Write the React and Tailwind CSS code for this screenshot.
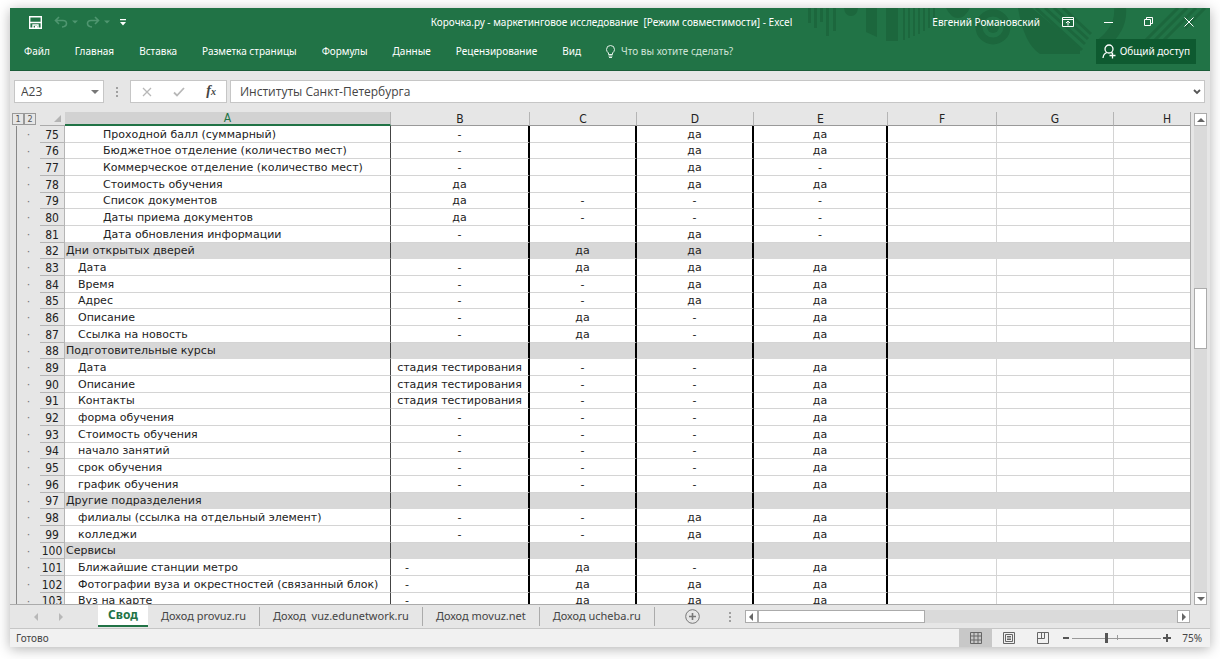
import { clsx } from "clsx";

const tabs = ["Файл", "Главная", "Вставка", "Разметка страницы", "Формулы", "Данные", "Рецензирование", "Вид"];

const columns = [
  { name: "A", width: "w-[326px]" },
  { name: "B", width: "w-[139px]" },
  { name: "C", width: "w-[107px]" },
  { name: "D", width: "w-[117px]" },
  { name: "E", width: "w-[134px]" },
  { name: "F", width: "w-[109px]" },
  { name: "G", width: "w-[117px]" },
  { name: "H", width: "w-[107px]" },
];

// level 0 is a section title, 1 and 2 are indented items
const rows = [
  { level: 2, label: "Проходной балл (суммарный)", values: ["-", "", "да", "да"] },
  { level: 2, label: "Бюджетное отделение (количество мест)", values: ["-", "", "да", "да"] },
  { level: 2, label: "Коммерческое отделение (количество мест)", values: ["-", "", "да", "-"] },
  { level: 2, label: "Стоимость обучения", values: ["да", "", "да", "да"] },
  { level: 2, label: "Список документов", values: ["да", "-", "-", "-"] },
  { level: 2, label: "Даты приема документов", values: ["да", "-", "-", "-"] },
  { level: 2, label: "Дата обновления информации", values: ["-", "", "да", "-"] },
  { level: 0, label: "Дни открытых дверей", values: ["", "да", "да", ""] },
  { level: 1, label: "Дата", values: ["-", "да", "да", "да"] },
  { level: 1, label: "Время", values: ["-", "-", "да", "да"] },
  { level: 1, label: "Адрес", values: ["-", "-", "да", "да"] },
  { level: 1, label: "Описание", values: ["-", "да", "-", "да"] },
  { level: 1, label: "Ссылка на новость", values: ["-", "да", "-", "да"] },
  { level: 0, label: "Подготовительные курсы", values: ["", "", "", ""] },
  { level: 1, label: "Дата", values: ["стадия тестирования", "-", "-", "да"] },
  { level: 1, label: "Описание", values: ["стадия тестирования", "-", "-", "да"] },
  { level: 1, label: "Контакты", values: ["стадия тестирования", "-", "-", "да"] },
  { level: 1, label: "форма обучения", values: ["-", "-", "-", "да"] },
  { level: 1, label: "Стоимость обучения", values: ["-", "-", "-", "да"] },
  { level: 1, label: "начало занятий", values: ["-", "-", "-", "да"] },
  { level: 1, label: "срок обучения", values: ["-", "-", "-", "да"] },
  { level: 1, label: "график обучения", values: ["-", "-", "-", "да"] },
  { level: 0, label: "Другие подразделения", values: ["", "", "", ""] },
  { level: 1, label: "филиалы (ссылка на отдельный элемент)", values: ["-", "-", "да", "да"] },
  { level: 1, label: "колледжи", values: ["-", "-", "да", "да"] },
  { level: 0, label: "Сервисы", values: ["", "", "", ""] },
  { level: 1, label: "Ближайшие станции метро", values: ["-", "да", "-", "да"], left: true },
  { level: 1, label: "Фотографии вуза и окрестностей (связанный блок)", values: ["-", "да", "да", "да"], left: true },
  { level: 1, label: "Вуз на карте", values: ["-", "да", "да", "да"], left: true },
];

const indents = ["pl-px", "pl-[13px]", "pl-[38px]"];

const sheets = ["Доход provuz.ru", "Доход  vuz.edunetwork.ru", "Доход movuz.net", "Доход ucheba.ru"];

const Arrow = ({ dir, className }) => {
  const paths = {
    up: "M0 6 L4 2 L8 6Z",
    down: "M0 2 L4 6 L8 2Z",
    left: "M6 0 L2 4 L6 8Z",
    right: "M2 0 L6 4 L2 8Z",
  };
  return (
    <svg viewBox="0 0 8 8" className={className || "size-2"} fill="currentColor" aria-hidden="true">
      <path d={paths[dir]} />
    </svg>
  );
};

const Dots = () => (
  <svg viewBox="0 0 2 12" className="h-3 w-0.5" fill="#a0a0a0" aria-hidden="true">
    <rect y="1" width="2" height="2" />
    <rect y="5" width="2" height="2" />
    <rect y="9" width="2" height="2" />
  </svg>
);

const HeaderPattern = () => (
  <svg
    className="pointer-events-none absolute top-0 right-0 h-[48px] w-[410px]"
    viewBox="0 0 410 48"
    fill="#1c673d"
    stroke="none"
    aria-hidden="true"
  >
    <path d="M8 0h3v15h-3zM14 0h3v20h-3zM20 0h3v14h-3zM26 0h3v28h-3zM33 0h3v23h-3zM44 0h14q-1 8-7 8t-7-8z" />
    <path d="M66 0h11v29l-11-5zM86 0h12v33h-12zM103 0h2v32h-2zM108 0h2v30h-2zM113 0h2v28h-2zM118 0h2v26h-2zM123 0h2v23h-2zM128 0h2v20h-2zM133 0h2v16h-2z" />
    <path d="M146 0h24q-5 10-12 10t-12-10z" />
    <circle cx="193" cy="19" r="14" fill="none" stroke="#1c673d" strokeWidth="7" />
    <circle cx="193" cy="19" r="6" />
    <path d="M218 0h14l48 40v6h-40q-16-10-22-46z" />
    <g fill="none" stroke="#1c673d">
      <path d="M236 0l46 42M245 0l40 36M254 0l34 31M263 0l28 26" strokeWidth="3" />
      <path d="M320 0q2 20-18 36" strokeWidth="12" />
      <path d="M340 38L378 0M349 38L387 0M358 38L396 0M385 20L405 0" strokeWidth="3" />
    </g>
  </svg>
);

const TitleBar = () => (
  <div className="relative grid h-7 grid-cols-[1fr_auto_1fr] items-center pr-4 pl-[19px]">
    <div className="flex items-center">
      <button aria-label="Сохранить">
        <svg viewBox="0 0 13 13" className="size-[13px]" fill="none" stroke="#fff" strokeWidth="1.4">
          <path d="M.7.7h11.6v11.6H.7zM1 6.500h11" />
          <path d="M4 12.300V9h5v3.300" />
          <path d="M6 10h2v2H6z" fill="#fff" stroke="none" />
        </svg>
      </button>
      <button aria-label="Отменить" className="ml-3 flex items-center gap-1 text-[#4f9670]">
        <svg viewBox="0 0 14 12" className="h-3 w-3.5" fill="none" stroke="currentColor" strokeWidth="1.6">
          <path d="M5 1L1.500 4.500L5 8M2 4.500H9Q12.500 4.500 12.500 7.500T8 11" />
        </svg>
        <Arrow dir="down" className="size-1.5" />
      </button>
      <button aria-label="Повторить" className="ml-2 flex items-center gap-1 text-[#4f9670]">
        <svg viewBox="0 0 14 12" className="h-3 w-3.5" fill="none" stroke="currentColor" strokeWidth="1.6">
          <path d="M9 1L12.500 4.500L9 8M12 4.500H5Q1.500 4.500 1.500 7.500T6 11" />
        </svg>
        <Arrow dir="down" className="size-1.5" />
      </button>
      <button aria-label="Настройка панели" className="ml-2.5">
        <svg viewBox="0 0 6 7" className="h-[7px] w-1.5" fill="#fff">
          <path d="M0 0h6v1.300H0zM0 3h6L3 6.500z" />
        </svg>
      </button>
    </div>
    <h1 className="whitespace-pre">Корочка.ру - маркетинговое исследование  [Режим совместимости] - Excel</h1>
    <div className="flex items-center justify-end">
      <span>Евгений Романовский</span>
      <button aria-label="Параметры ленты" className="ml-[22px]">
        <svg viewBox="0 0 12 10" className="h-2.5 w-3" fill="none" stroke="#fff">
          <path d="M.5.5h11v9H.5zM.5 2.500h11M6 8.500V4.500M4 6l2-2 2 2" />
        </svg>
      </button>
      <button aria-label="Свернуть" className="ml-[30px]">
        <svg viewBox="0 0 10 10" className="size-2.5" stroke="#fff">
          <path d="M0 5.500h9" />
        </svg>
      </button>
      <button aria-label="Свернуть в окно" className="ml-[30px]">
        <svg viewBox="0 0 10 10" className="size-2.5" fill="none" stroke="#fff">
          <path d="M.5 2.500h6v6h-6zM2.500 2.500v-2h6v6h-2" />
        </svg>
      </button>
      <button aria-label="Закрыть" className="ml-[30px]">
        <svg viewBox="0 0 10 10" className="size-2.5" stroke="#fff">
          <path d="M.5.5l9 9M9.500.5l-9 9" />
        </svg>
      </button>
    </div>
  </div>
);

const Ribbon = () => (
  <div className="relative flex h-[35px] items-center justify-between border-b border-[#1a5c38] px-3.5 pb-[3px]">
    <nav className="flex items-center gap-[25px]">
      {tabs.map((tab) => (
        <button key={tab}>{tab}</button>
      ))}
      <label className="flex items-center gap-1.5 text-[#cfe3d7]">
        <svg viewBox="0 0 9 13" className="h-[13px] w-[9px]" fill="none" stroke="#e3f0e8">
          <path d="M2.500 9.500V8Q.5 6.500.5 4.500a4 4 0 0 1 8 0Q8.500 6.500 6.500 8v1.500zM2.500 11h4M3 12.500h3" />
        </svg>
        <input
          className="w-40 outline-none placeholder:text-[#cfe3d7]"
          placeholder="Что вы хотите сделать?"
        />
      </label>
    </nav>
    <button className="flex h-[25px] items-center gap-1 bg-[#0e5a30] px-1.5">
      <svg viewBox="0 0 14 15" className="h-[15px] w-3.5" fill="none" stroke="#fff" strokeWidth="1.300">
        <circle cx="7" cy="5" r="4" />
        <path d="M1 14Q1.500 9.500 5 8.500M9 8.500l1.500 1M7.500 11.500h6M10.500 8.500v6" />
      </svg>
      Общий доступ
    </button>
  </div>
);

const FormulaBar = () => (
  <div className="flex h-[23px] items-stretch pr-[5px] pl-1 font-['Open_Sans',sans-serif] text-xs text-[#444]">
    <div className="flex w-[90px] items-center border border-[#c6c6c6] bg-white pr-1">
      <input aria-label="Имя ячейки" defaultValue="A23" className="w-full min-w-0 pl-1.5 outline-none" />
      <button aria-label="Список имён" className="text-[#777]">
        <Arrow dir="down" />
      </button>
    </div>
    <div className="flex w-[26px] items-center justify-center">
      <Dots />
    </div>
    <div className="flex w-[97px] items-center justify-between border border-[#c6c6c6] bg-white pr-2.5 pl-[11px]">
      <button aria-label="Отмена">
        <svg viewBox="0 0 10 10" className="size-2.5" stroke="#b8b8b8" strokeWidth="1.300">
          <path d="M1 1l8 8M9 1L1 9" />
        </svg>
      </button>
      <button aria-label="Ввод">
        <svg viewBox="0 0 12 10" className="h-2.5 w-3" fill="none" stroke="#b8b8b8" strokeWidth="1.800">
          <path d="M1 5.500L4 8.500L11 1" />
        </svg>
      </button>
      <button
        aria-label="Вставить функцию"
        className="font-['Liberation_Serif',serif] text-sm leading-4 font-bold italic"
      >
        f<span className="text-[10px]">x</span>
      </button>
    </div>
    <div className="ml-[3px] flex flex-1 items-center border border-[#c6c6c6] bg-white pr-[3px]">
      <input
        aria-label="Строка формул"
        defaultValue="Институты Санкт-Петербурга"
        className="flex-1 pl-[9px] outline-none"
      />
      <button aria-label="Развернуть строку формул">
        <svg viewBox="0 0 8 8" className="size-2" fill="none" stroke="#555" strokeWidth="1.800">
          <path d="M1 2l3 3 3-3" />
        </svg>
      </button>
    </div>
  </div>
);

const columnBorder = (i) => {
  if (i === 0) return "border-r border-r-[#444]";
  if (i < 5) return "border-r-2 border-r-black";
  return "border-r border-r-[#d4d4d4]";
};

const Sheet = () => (
  <div className="min-w-0 flex-1 overflow-hidden border-r border-b border-[#ababab]">
    <table className="w-[1211px] table-fixed border-separate border-spacing-0 font-['DejaVu_Sans',sans-serif] text-[11px] leading-[15px] text-[#222]">
      <colgroup>
        <col className="w-[7px]" />
        <col className="w-[23px]" />
        <col className="w-[25px]" />
        {columns.map((col) => (
          <col key={col.name} className={col.width} />
        ))}
      </colgroup>
      <thead className="font-['DejaVu_Sans_Condensed','DejaVu_Sans',sans-serif] text-xs leading-3">
        <tr className="h-3.5">
          <th colSpan={2} className="p-0">
            <div className="ml-0.5 flex text-[9px] font-normal text-[#555]">
              <button className="h-3 w-3 border border-[#999] leading-[10px]">1</button>
              <button className="h-3 w-3 border border-[#999] leading-[10px]">2</button>
            </div>
          </th>
          <th className="border-b border-[#ababab] p-0">
            <svg viewBox="0 0 7 7" className="mr-1 ml-auto size-[7px]" fill="#b4b4b4" aria-hidden="true">
              <path d="M7 0v7H0z" />
            </svg>
          </th>
          {columns.map((col, i) => (
            <th
              key={col.name}
              className={clsx(
                "border-r border-r-[#b5b5b5] p-0 font-normal",
                i === 0 ? "border-b-2 border-b-[#217346] bg-[#d2d2d2] text-[#217346]" : "border-b border-b-[#999]"
              )}
            >
              {col.name}
            </th>
          ))}
        </tr>
      </thead>
      <tbody>
        {rows.map((row, r) => (
          <tr key={r} className={clsx("h-[17px] nth-[3n+2]:h-4", row.level === 0 ? "bg-[#d8d8d8]" : "bg-white")}>
            <td className="border-r border-[#888] bg-[#e6e6e6] p-0" />
            <td className="bg-[#e6e6e6] p-0 text-center text-[#777]">·</td>
            <th className="border-r border-b border-[#b5b5b5] bg-[#e6e6e6] p-0 text-center align-bottom font-['DejaVu_Sans_Condensed','DejaVu_Sans',sans-serif] text-xs leading-[13px] font-normal">
              {75 + r}
            </th>
            {columns.map((col, i) => (
              <td
                key={col.name}
                className={clsx(
                  "border-b p-0 whitespace-nowrap",
                  row.level === 0 ? "border-b-[#d8d8d8]" : "border-b-[#d4d4d4]",
                  (row.level > 0 || i < 5) && columnBorder(i),
                  i === 0 && indents[row.level],
                  i > 0 && (row.left && i === 1 ? "pl-3.5" : "text-center")
                )}
              >
                {i === 0 ? row.label : row.values[i - 1]}
              </td>
            ))}
          </tr>
        ))}
      </tbody>
    </table>
  </div>
);

const scrollButton =
  "flex size-[13px] shrink-0 items-center justify-center border border-[#ababab] bg-white text-[#666]";

const SheetTabs = () => (
  <div className="flex h-[23px] items-stretch text-[11px] text-[#444]">
    <div className="flex w-[88px] items-center gap-[17px] pl-[22px] text-[#b8b8b8]">
      <button aria-label="Предыдущий лист">
        <Arrow dir="left" />
      </button>
      <button aria-label="Следующий лист">
        <Arrow dir="right" />
      </button>
    </div>
    <button className="mb-px w-[50px] border-b-2 border-[#217346] bg-white text-xs font-bold text-[#217346]">
      Свод
    </button>
    {sheets.map((sheet) => (
      <button key={sheet} className="my-0.5 border-r border-[#ababab] px-[13px] whitespace-pre">
        {sheet}
      </button>
    ))}
    <button aria-label="Новый лист" className="ml-[30px]">
      <svg viewBox="0 0 15 15" className="size-[15px]" fill="none" stroke="#777">
        <circle cx="7.500" cy="7.500" r="6.800" />
        <path d="M7.500 4v7M4 7.500h7" strokeWidth="1.600" />
      </svg>
    </button>
    <div className="ml-[29px] flex items-center">
      <Dots />
    </div>
    <div className="mr-5 ml-3.5 flex flex-1 items-center">
      <button aria-label="Прокрутить влево" className={scrollButton}>
        <Arrow dir="left" />
      </button>
      <div className="h-[13px] flex-1 bg-[#dadada]">
        <div className="h-full w-2/5 border border-[#ababab] bg-white" />
      </div>
      <button aria-label="Прокрутить вправо" className={scrollButton}>
        <Arrow dir="right" />
      </button>
    </div>
  </div>
);

const StatusBar = () => (
  <div className="flex h-[19px] items-stretch border-t border-[#c6c6c6] bg-[#f1f1f1] pr-2 pl-1.5 text-[#444]">
    <span className="flex-1 self-center">Готово</span>
    <button aria-label="Обычный" className="flex w-[33px] items-center justify-center bg-[#c8c8c8]">
      <svg viewBox="0 0 12 12" className="size-3" fill="none" stroke="#666">
        <path d="M.5.5h11v11H.5zM4 .5v11M8 .5v11M.5 4h11M.5 8h11" />
      </svg>
    </button>
    <button aria-label="Разметка страницы" className="flex w-[34px] items-center justify-center">
      <svg viewBox="0 0 12 12" className="size-3" fill="none" stroke="#666">
        <path d="M.5.5h11v11H.5zM2.500 2.500h7v7h-7zM4 4.500h4M4 6h4M4 7.500h4" />
      </svg>
    </button>
    <button aria-label="Страничный" className="flex w-[33px] items-center justify-center">
      <svg viewBox="0 0 12 12" className="size-3" fill="none" stroke="#666">
        <path d="M.5.5h11v11H.5zM4.500.5v6M7.500.5v6M.5 6.500h7" />
      </svg>
    </button>
    <button aria-label="Уменьшить" className="ml-[3px] flex items-center">
      <svg viewBox="0 0 8 8" className="size-2" stroke="#555" strokeWidth="2">
        <path d="M1 4h6" />
      </svg>
    </button>
    <div className="relative mx-0.5 flex w-[89px] items-center">
      <span className="absolute top-1.5 left-1/2 h-[5px] w-px bg-[#999]" />
      <input
        type="range"
        aria-label="Масштаб"
        min="0"
        max="200"
        defaultValue="75"
        className="relative h-px w-full appearance-none bg-[#999] [&::-webkit-slider-thumb]:h-2.5 [&::-webkit-slider-thumb]:w-[3px] [&::-webkit-slider-thumb]:appearance-none [&::-webkit-slider-thumb]:bg-[#555]"
      />
    </div>
    <button aria-label="Увеличить" className="flex items-center">
      <svg viewBox="0 0 8 8" className="size-2" stroke="#555" strokeWidth="2">
        <path d="M0 4h8M4 0v8" />
      </svg>
    </button>
    <span className="ml-[11px] self-center">75%</span>
  </div>
);

const App = () => (
  <div className="h-screen bg-white px-2.5 pt-2 pb-3 font-['Noto_Sans',sans-serif] text-[10px]">
    <div className="flex h-full flex-col bg-[#e6e6e6] shadow-[0_2px_12px_rgba(0,0,0,0.3)]">
      <header className="relative bg-[#217346] text-white">
        <HeaderPattern />
        <TitleBar />
        <Ribbon />
      </header>
      <div className="py-[9px]">
        <FormulaBar />
      </div>
      <main className="flex min-h-0 flex-1">
        <Sheet />
        <div className="mx-[3px] flex w-[13px] flex-col pt-px">
          <button aria-label="Прокрутить вверх" className={scrollButton}>
            <Arrow dir="up" />
          </button>
          <div className="flex flex-1 flex-col bg-[#dadada]">
            <div className="flex-[161]" />
            <div className="h-[61px] border border-[#ababab] bg-white" />
            <div className="flex-[242]" />
          </div>
          <button aria-label="Прокрутить вниз" className={scrollButton}>
            <Arrow dir="down" />
          </button>
        </div>
      </main>
      <SheetTabs />
      <StatusBar />
    </div>
  </div>
);

export default App;
